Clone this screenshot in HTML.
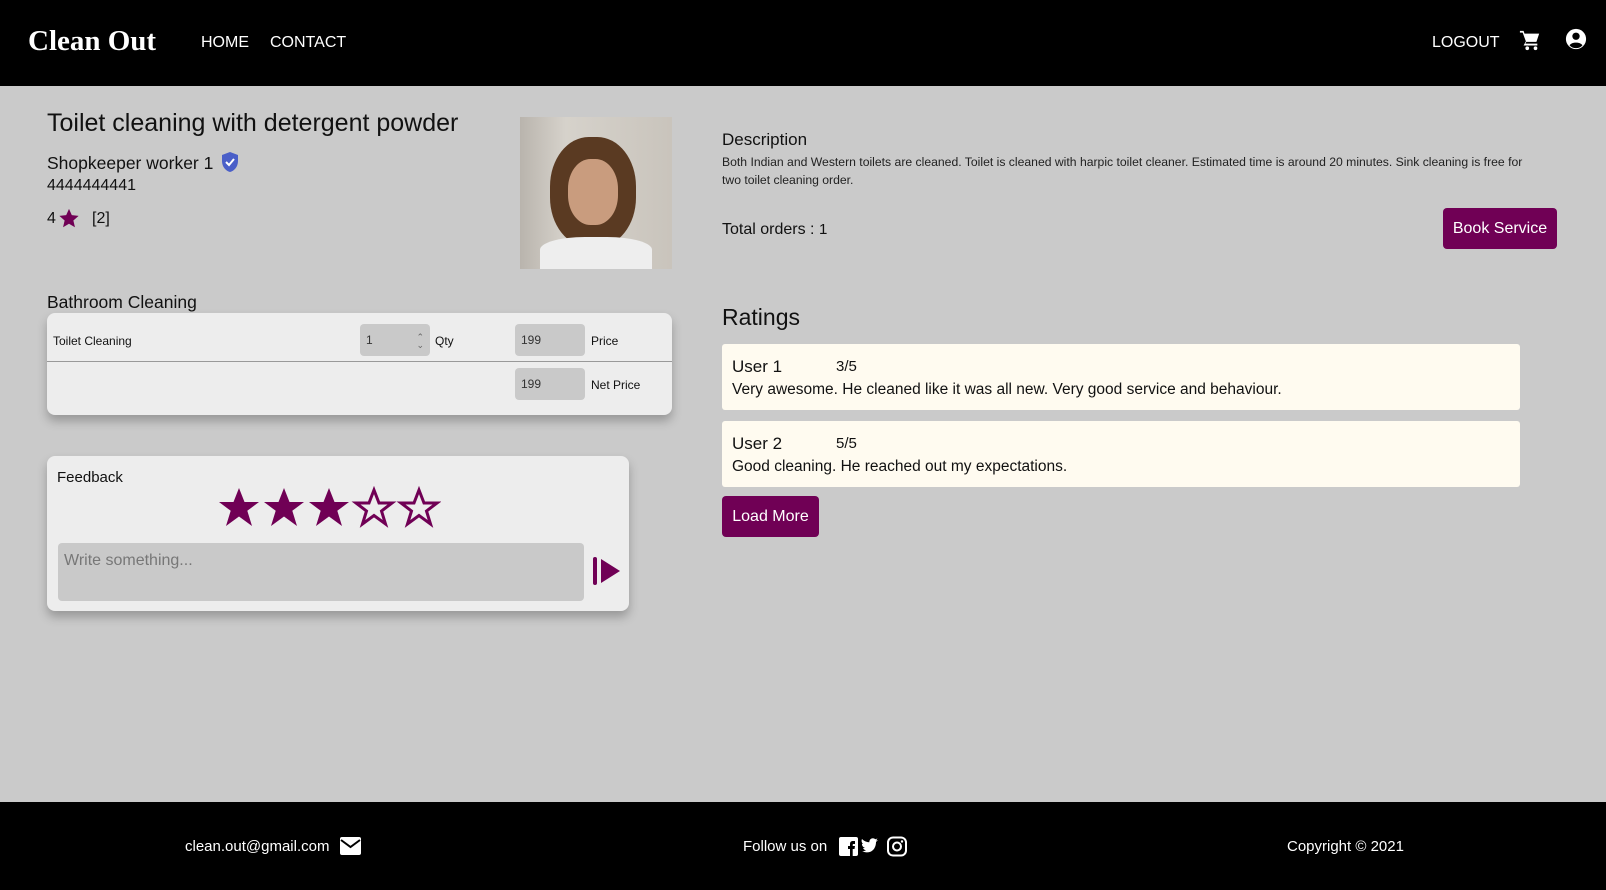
<!DOCTYPE html>
<html><head><meta charset="utf-8"><style>
*{margin:0;padding:0;box-sizing:border-box}
body{width:1606px;height:890px;background:#cacaca;font-family:"Liberation Sans",sans-serif;color:#111;position:relative;overflow:hidden}
.a{position:absolute}
.hdr{left:0;top:0;width:1606px;height:86px;background:#000}
.w{color:#fff}
.card{background:#ededed;border-radius:8px;box-shadow:0 6px 10px rgba(0,0,0,.25)}
.inp{background:#c9c9c9;border-radius:4px;font-size:12px;color:#333;padding:9px 6px}
.rc{background:#fffbf0;border-radius:3px;left:722px;width:798px;height:66px}
.btn{background:#700055;color:#fff;border-radius:4px;font-size:16px;text-align:center}
</style></head><body>
<div class="a hdr"></div>
<div class="a w" style="left:28px;top:25px;font-family:'Liberation Serif',serif;font-weight:bold;font-size:29px">Clean Out</div>
<div class="a w" style="left:201px;top:34px;font-size:16px">HOME</div>
<div class="a w" style="left:270px;top:34px;font-size:16px">CONTACT</div>
<div class="a w" style="left:1432px;top:34px;font-size:16px">LOGOUT</div>
<svg class="a" style="left:1519px;top:29px" width="22" height="22" viewBox="0 0 24 24"><path fill="#fff" d="M1 2h4l1 3h16l-3 9H8l-1 2h13v2H5l2.5-4.5L4 4H1z"/><circle cx="9" cy="21" r="2" fill="#fff"/><circle cx="18" cy="21" r="2" fill="#fff"/></svg>
<svg class="a" style="left:1565px;top:28px" width="22" height="22" viewBox="0 0 24 24"><circle cx="12" cy="12" r="11" fill="#fff"/><circle cx="12" cy="9" r="4" fill="#000"/><path d="M5 19c2-4 12-4 14 0c-2 2-4 3-7 3s-5-1-7-3z" fill="#000"/></svg>

<div class="a" style="left:47px;top:109px;font-size:25px">Toilet cleaning with detergent powder</div>
<div class="a" style="left:47px;top:153px;font-size:17.5px">Shopkeeper worker 1</div>
<svg class="a" style="left:220px;top:151px" width="20" height="22" viewBox="0 0 20 22"><path d="M10 1L2 4v6c0 6 4 10 8 11c4-1 8-5 8-11V4z" fill="#4a5fc8"/><path d="M6 11l3 3l5-6" stroke="#fff" stroke-width="2" fill="none"/></svg>
<div class="a" style="left:47px;top:177px;font-size:16px">4444444441</div>
<div class="a" style="left:47px;top:210px;font-size:16px">4</div>
<svg class="a" style="left:58px;top:208px" width="22" height="21" viewBox="0 0 24 24"><path fill="#700055" d="M12 1l3.2 7.2L23 9l-6 5.3L18.8 22 12 18l-6.8 4L7 14.3 1 9l7.8-.8z"/></svg>
<div class="a" style="left:92px;top:210px;font-size:16px">[2]</div>
<div class="a" style="left:520px;top:117px;width:152px;height:152px;background:linear-gradient(90deg,#b9b4ad,#d6d2cb 30%,#c9c4bc);overflow:hidden">
 <div class="a" style="left:30px;top:20px;width:86px;height:110px;border-radius:45%;background:#5a3a22"></div>
 <div class="a" style="left:48px;top:42px;width:50px;height:66px;border-radius:45%;background:#c99c7e"></div>
 <div class="a" style="left:20px;top:120px;width:112px;height:32px;border-radius:40% 40% 0 0;background:#eee"></div>
</div>

<div class="a" style="left:47px;top:292px;font-size:17.5px">Bathroom Cleaning</div>
<div class="a card" style="left:47px;top:313px;width:625px;height:102px"></div>
<div class="a" style="left:47px;top:361px;width:625px;height:1px;background:#999"></div>
<div class="a" style="left:53px;top:334px;font-size:12px">Toilet Cleaning</div>
<div class="a inp" style="left:360px;top:324px;width:70px;height:32px">1<span style="float:right;font-size:9px;line-height:8px;color:#666">⌃<br>⌄</span></div>
<div class="a" style="left:435px;top:334px;font-size:12px">Qty</div>
<div class="a inp" style="left:515px;top:324px;width:70px;height:32px">199</div>
<div class="a" style="left:591px;top:334px;font-size:12px">Price</div>
<div class="a inp" style="left:515px;top:368px;width:70px;height:32px">199</div>
<div class="a" style="left:591px;top:378px;font-size:12px">Net Price</div>

<div class="a card" style="left:47px;top:456px;width:582px;height:155px"></div>
<div class="a" style="left:57px;top:469px;font-size:15px">Feedback</div>
<svg class="a" style="left:217px;top:486px" width="224" height="44" viewBox="0 0 224 44">
<path d="M22 2l5.5 14H42l-11.7 8.8L35 40 22 30.5 9 40l4.7-15.2L2 16h14.5z" fill="#700055"/>
<path d="M22 2l5.5 14H42l-11.7 8.8L35 40 22 30.5 9 40l4.7-15.2L2 16h14.5z" transform="translate(45)" fill="#700055"/>
<path d="M22 2l5.5 14H42l-11.7 8.8L35 40 22 30.5 9 40l4.7-15.2L2 16h14.5z" transform="translate(90)" fill="#700055"/>
<path d="M22 4l5 13H40l-10.5 8L33.5 38 22 29.5 10.5 38l4-13L4 17h13z" transform="translate(135)" fill="none" stroke="#700055" stroke-width="3"/>
<path d="M22 4l5 13H40l-10.5 8L33.5 38 22 29.5 10.5 38l4-13L4 17h13z" transform="translate(180)" fill="none" stroke="#700055" stroke-width="3"/>
</svg>
<div class="a" style="left:58px;top:543px;width:526px;height:58px;background:#c9c9c9;border-radius:4px;color:#777;font-size:16px;padding:9px 6px">Write something...</div>
<svg class="a" style="left:592px;top:556px" width="30" height="30" viewBox="0 0 30 30"><rect x="1" y="1" width="4" height="28" rx="2" fill="#700055"/><path d="M9 3l19 12L9 27z" fill="#700055"/></svg>

<div class="a" style="left:722px;top:130px;font-size:17px">Description</div>
<div class="a" style="left:722px;top:153px;width:880px;font-size:12.2px;line-height:18px;color:#222">Both Indian and Western toilets are cleaned. Toilet is cleaned with harpic toilet cleaner. Estimated time is around 20 minutes. Sink cleaning is free for<br>two toilet cleaning order.</div>
<div class="a" style="left:722px;top:221px;font-size:16px">Total orders : <span style="font-size:15px">1</span></div>
<div class="a btn" style="left:1443px;top:208px;width:114px;height:41px;line-height:41px">Book Service</div>
<div class="a" style="left:722px;top:304px;font-size:23px">Ratings</div>
<div class="a rc" style="top:344px"></div>
<div class="a" style="left:732px;top:357px;font-size:17px">User 1</div>
<div class="a" style="left:836px;top:358px;font-size:15px">3/5</div>
<div class="a" style="left:732px;top:381px;font-size:15.5px">Very awesome. He cleaned like it was all new. Very good service and behaviour.</div>
<div class="a rc" style="top:421px"></div>
<div class="a" style="left:732px;top:434px;font-size:17px">User 2</div>
<div class="a" style="left:836px;top:435px;font-size:15px">5/5</div>
<div class="a" style="left:732px;top:458px;font-size:15.5px">Good cleaning. He reached out my expectations.</div>
<div class="a btn" style="left:722px;top:496px;width:97px;height:41px;line-height:41px">Load More</div>

<div class="a" style="left:0;top:802px;width:1606px;height:88px;background:#000"></div>
<div class="a w" style="left:185px;top:838px;font-size:15px">clean.out@gmail.com</div>
<svg class="a" style="left:340px;top:837px" width="21" height="18" viewBox="0 0 21 18"><rect width="21" height="18" rx="2" fill="#fff"/><path d="M1 3l9.5 7L20 3" stroke="#000" stroke-width="2" fill="none"/></svg>
<div class="a w" style="left:743px;top:838px;font-size:15px">Follow us on</div>
<svg class="a" style="left:839px;top:836px" width="70" height="21" viewBox="0 0 70 21"><rect x="0" y="1" width="19" height="19" rx="2" fill="#fff"/><path d="M11 20v-7h-2v-3h2V8c0-2 1-3 3-3h2v3h-1.5c-.6 0-.8.3-.8 1v1H16l-.5 3h-1.8v7z" fill="#000"/><path d="M23 15c3 2 8 2 11-1c2-2 3-5 3-8l2-2-2 .5 1.5-2-2.2.8c-2-2-6-1-6 3C26 6 24 4 23 3c-1 2 0 4 1 5h-1c0 2 1 3 3 4h-2c1 2 2 2 3 2-1 1-3 1.5-4 1z" fill="#fff"/><rect x="49" y="1.5" width="18" height="18" rx="5" fill="none" stroke="#fff" stroke-width="2"/><circle cx="58" cy="10.5" r="4" fill="none" stroke="#fff" stroke-width="2"/><circle cx="63" cy="5.5" r="1.2" fill="#fff"/></svg>
<div class="a w" style="left:1287px;top:838px;font-size:15px">Copyright © 2021</div>
</body></html>
